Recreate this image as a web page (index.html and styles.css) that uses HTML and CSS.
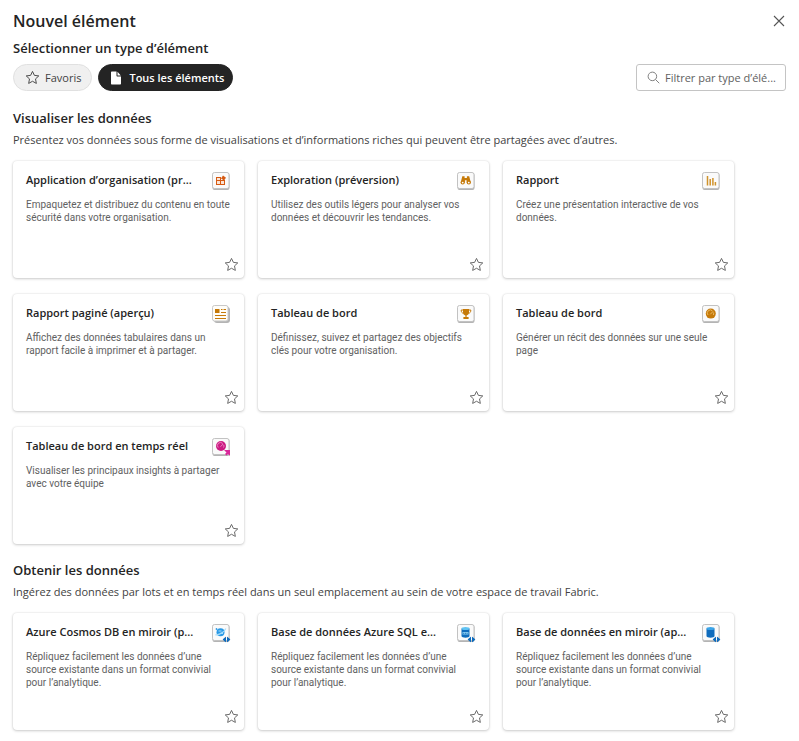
FILE: index.html
```html
<!DOCTYPE html>
<html lang="fr">
<head>
<meta charset="utf-8">
<meta name="viewport" content="width=device-width, initial-scale=1">
<title>Nouvel élément</title>
<link rel="stylesheet" href="styles.css">
</head>
<body>
<svg class="defs" aria-hidden="true">
  <defs>
    <symbol id="star" viewBox="0 0 16 16"><path d="M8 1.500l2 4.200 4.700.6-3.500 3.200.9 4.800L8 12l-4.100 2.300.9-4.800-3.500-3.200L6 5.700z" fill="none" stroke="currentColor" stroke-linejoin="round"/></symbol>
    <symbol id="tile" viewBox="0 0 20 20"><rect x="1.5" y="2" width="17" height="17" rx="2" fill="#b4b4b4"/><rect x="1.5" y="1.5" width="16.5" height="16" rx="2" fill="#fafafa" stroke="#c2c2c2"/></symbol>
    <symbol id="mirror" viewBox="0 0 8 6"><path d="M3.5 0v6L0 3zM4.5 0v6L8 3z" fill="#0f6cbd"/></symbol>
  </defs>
</svg>
<main class="dialog">
  <header class="header">
    <h1 class="title">Nouvel élément</h1>
    <button class="close" type="button" aria-label="Fermer"><svg viewBox="0 0 12 12"><path d="M1 1l10 10M11 1L1 11" fill="none" stroke="#555" stroke-width="1.1"/></svg></button>
  </header>
  <h2 class="heading">Sélectionner un type d’élément</h2>
  <div class="toolbar">
    <button class="pill" type="button"><svg class="star"><use href="#star"/></svg>Favoris</button>
    <button class="pill pill-active" type="button"><svg class="doc" viewBox="0 0 12 14"><path d="M2 0.5h4.5V4.5c0 .6.4 1 1 1H11v7c0 .6-.4 1-1 1H2c-.6 0-1-.4-1-1v-11c0-.6.4-1 1-1z M7.5.7L10.8 4.5H7.5z" fill="#fff"/></svg>Tous les éléments</button>
    <label class="search"><svg viewBox="0 0 14 14"><circle cx="5.8" cy="5.8" r="4.6" fill="none" stroke="#777"/><path d="M9.2 9.2l4 4" stroke="#777"/></svg><input type="text" aria-label="Filtrer par type d’élément" placeholder="Filtrer par type d’élé..."></label>
  </div>

  <section class="group">
    <h2 class="heading">Visualiser les données</h2>
    <p class="intro">Présentez vos données sous forme de visualisations et d’informations riches qui peuvent être partagées avec d’autres.</p>
    <div class="grid">
      <article class="card">
        <div class="card-head"><h3>Application d’organisation (pr...</h3>
          <svg class="icon" viewBox="0 0 20 20"><use href="#tile"/><path d="M5 6h5v3h4v5H5z" fill="#d65a12"/><path d="M6 7h3v2H6zM6 10h3v3H6zM10 10h3v3h-3z" fill="#fbe3d3"/><path d="M12 4.500l3 2.300-2 2.700-3-2z" fill="#d65a12"/></svg></div>
        <p>Empaquetez et distribuez du contenu en toute sécurité dans votre organisation.</p>
        <button class="fav" type="button" aria-label="Ajouter aux favoris"><svg class="star"><use href="#star"/></svg></button>
      </article>
      <article class="card">
        <div class="card-head"><h3>Exploration (préversion)</h3>
          <svg class="icon" viewBox="0 0 20 20"><use href="#tile"/><path d="M6.3 5.3h2.3V7h2.3V5.3h2.3l1.6 6.3H10.6V9.3H8.9v2.3H4.7z" fill="#c67a09"/><circle cx="6.7" cy="11.5" r="2.1" fill="#c67a09"/><circle cx="12.8" cy="11.5" r="2.1" fill="#c67a09"/><circle cx="6.7" cy="11.6" r=".9" fill="#fff"/><circle cx="12.8" cy="11.6" r=".9" fill="#fff"/></svg></div>
        <p>Utilisez des outils légers pour analyser vos données et découvrir les tendances.</p>
        <button class="fav" type="button" aria-label="Ajouter aux favoris"><svg class="star"><use href="#star"/></svg></button>
      </article>
      <article class="card">
        <div class="card-head"><h3>Rapport</h3>
          <svg class="icon" viewBox="0 0 20 20"><use href="#tile"/><path d="M6.500 5v9.500M9.200 8v6.500M11.900 7v7.500M14.400 11v3.500" fill="none" stroke="#d0922a" stroke-width="1.500"/></svg></div>
        <p>Créez une présentation interactive de vos données.</p>
        <button class="fav" type="button" aria-label="Ajouter aux favoris"><svg class="star"><use href="#star"/></svg></button>
      </article>
      <article class="card">
        <div class="card-head"><h3>Rapport paginé (aperçu)</h3>
          <svg class="icon" viewBox="0 0 20 20"><rect x="3" y="3" width="16" height="16" rx="3" fill="#b4b4b4"/><rect x="1.5" y="1.5" width="15.5" height="15.5" rx="2" fill="#fffdf8" stroke="#c8c8c8"/><path d="M4 5h4.500v4H4z" fill="#c67a09"/><path d="M10 5.500h1.500M12.500 5.500H15M10 8.500h5M4 11.500h11M4 14.500h11" stroke="#c67a09"/></svg></div>
        <p>Affichez des données tabulaires dans un rapport facile à imprimer et à partager.</p>
        <button class="fav" type="button" aria-label="Ajouter aux favoris"><svg class="star"><use href="#star"/></svg></button>
      </article>
      <article class="card">
        <div class="card-head"><h3>Tableau de bord</h3>
          <svg class="icon" viewBox="0 0 20 20"><use href="#tile"/><path d="M7 5h6v3.5c0 1.8-1.2 2.7-2.4 2.9v1.5h2V15H7.4v-2.1h2v-1.5C8.200 11.200 7 10.300 7 8.500z" fill="#c67a09"/><path d="M7 6H5.200c0 2 .6 3 2.100 3.200M13 6h1.800c0 2-.6 3-2.100 3.200" fill="none" stroke="#c67a09"/></svg></div>
        <p>Définissez, suivez et partagez des objectifs clés pour votre organisation.</p>
        <button class="fav" type="button" aria-label="Ajouter aux favoris"><svg class="star"><use href="#star"/></svg></button>
      </article>
      <article class="card">
        <div class="card-head"><h3>Tableau de bord</h3>
          <svg class="icon" viewBox="0 0 20 20"><use href="#tile"/><circle cx="9.800" cy="9.600" r="5" fill="#c67a09"/><path d="M7 11a3 3 0 0 1 4.500-4M12.600 8.500c.3 1 .1 1.800-.3 2.500M9.300 10.300L12 7.500" fill="none" stroke="#f0c878" stroke-width=".8"/></svg></div>
        <p>Générer un récit des données sur une seule page</p>
        <button class="fav" type="button" aria-label="Ajouter aux favoris"><svg class="star"><use href="#star"/></svg></button>
      </article>
      <article class="card">
        <div class="card-head"><h3>Tableau de bord en temps réel</h3>
          <svg class="icon" viewBox="0 0 20 20"><use href="#tile"/><circle cx="10" cy="9" r="5" fill="#cc1b82"/><path d="M7.200 10.500a3 3 0 0 1 4.500-4M12.800 8c.3 1 .1 1.800-.3 2.500M9.500 9.700L12.200 7" fill="none" stroke="#f0a0d0" stroke-width=".8"/><path d="M13 13h6v6l-2-2-1.500 1.500-1.500-1.500L15.500 15.500z" fill="#d9279a"/></svg></div>
        <p>Visualiser les principaux insights à partager avec votre équipe</p>
        <button class="fav" type="button" aria-label="Ajouter aux favoris"><svg class="star"><use href="#star"/></svg></button>
      </article>
    </div>
  </section>

  <section class="group">
    <h2 class="heading">Obtenir les données</h2>
    <p class="intro">Ingérez des données par lots et en temps réel dans un seul emplacement au sein de votre espace de travail Fabric.</p>
    <div class="grid">
      <article class="card">
        <div class="card-head"><h3>Azure Cosmos DB en miroir (p...</h3>
          <svg class="icon" viewBox="0 0 20 20"><use href="#tile"/><circle cx="9.500" cy="9.200" r="4" fill="#2899e6"/><path d="M4.500 11.500c1.500 1.500 9.500-2.500 10.200-6M7.500 8h3M9 10.300h3" fill="none" stroke="#a6dcfa" stroke-width="1.200"/><path d="M5.500 5v2M4.500 6h2" stroke="#2899e6" stroke-width=".8"/><use href="#mirror" x="11.500" y="13.500" width="8" height="6"/></svg></div>
        <p>Répliquez facilement les données d’une source existante dans un format convivial pour l’analytique.</p>
        <button class="fav" type="button" aria-label="Ajouter aux favoris"><svg class="star"><use href="#star"/></svg></button>
      </article>
      <article class="card">
        <div class="card-head"><h3>Base de données Azure SQL e...</h3>
          <svg class="icon" viewBox="0 0 20 20"><use href="#tile"/><path d="M5.500 5.500v7.500c0 2.200 8 2.200 8 0V5.500z" fill="#0f6cbd"/><ellipse cx="9.500" cy="5.500" rx="4" ry="1.500" fill="#5fc3f3"/><path d="M6.500 9h6v2.500h-6z" fill="#8cd0f5"/><path d="M7.200 10.300h4.600" stroke="#0f6cbd" stroke-dasharray="1 .7"/><use href="#mirror" x="11.500" y="13.500" width="8" height="6"/></svg></div>
        <p>Répliquez facilement les données d’une source existante dans un format convivial pour l’analytique.</p>
        <button class="fav" type="button" aria-label="Ajouter aux favoris"><svg class="star"><use href="#star"/></svg></button>
      </article>
      <article class="card">
        <div class="card-head"><h3>Base de données en miroir (ap...</h3>
          <svg class="icon" viewBox="0 0 20 20"><use href="#tile"/><path d="M5.500 5.500v7.500c0 2.200 8 2.200 8 0V5.500z" fill="#0f6cbd"/><ellipse cx="9.500" cy="5.500" rx="4" ry="1.500" fill="#3ba4e8"/><use href="#mirror" x="11.500" y="13.500" width="8" height="6"/></svg></div>
        <p>Répliquez facilement les données d’une source existante dans un format convivial pour l’analytique.</p>
        <button class="fav" type="button" aria-label="Ajouter aux favoris"><svg class="star"><use href="#star"/></svg></button>
      </article>
    </div>
  </section>
</main>
</body>
</html>
```
FILE: styles.css
```css
* { box-sizing: border-box; }
body {
  margin: 0;
  background: #fff;
  color: #242424;
  font-family: "Segoe UI", "Open Sans", "Noto Sans", sans-serif;
  font-size: 11px;
}
h1, h2, h3, p { margin: 0; }
button, input { font: inherit; color: inherit; }
button { cursor: pointer; }
.defs { position: absolute; width: 0; height: 0; }
.dialog { padding: 9px 13px 11px; }
.header { display: flex; justify-content: space-between; align-items: center; }
.title { font-size: 16px; line-height: 24px; font-weight: 600; }
.close { display: flex; padding: 1px; border: 0; background: none; }
.close svg { width: 12px; height: 12px; }
.heading { font-size: 13px; line-height: 20px; font-weight: 600; }
.header + .heading { margin-top: 5px; }
.toolbar { display: flex; gap: 6px; margin: 6px 0 17px; }
.pill {
  display: flex;
  align-items: center;
  gap: 5px;
  height: 27px;
  padding: 0 10px 0 11px;
  border: 1px solid #e0e0e0;
  border-radius: 14px;
  background: #f0f0f0;
  color: #424242;
}
.pill-active { gap: 7px; padding-right: 8px; background: #242424; border-color: #242424; color: #fff; font-weight: 600; }
.star { width: 15px; height: 15px; flex: none; }
.doc { width: 12px; height: 14px; }
.search {
  display: flex;
  align-items: center;
  gap: 5px;
  width: 150px;
  height: 27px;
  margin-left: auto;
  padding: 0 5px 0 10px;
  border: 1px solid #c4c4c4;
  border-radius: 3px;
}
.search svg { width: 13px; height: 13px; flex: none; }
.search input { min-width: 0; flex: 1; padding: 0; border: 0; outline: 0; background: none; }
.search input::placeholder { color: #616161; opacity: 1; }
.group + .group { margin-top: 16px; }
.intro { margin-top: 3px; line-height: 18px; color: #424242; }
.grid {
  display: grid;
  grid-template-columns: repeat(auto-fill, 231px);
  gap: 16px 14px;
  margin-top: 12px;
}
.card {
  display: flex;
  flex-direction: column;
  min-height: 117px;
  padding: 10px 5px 6px 13px;
  border-radius: 4px;
  box-shadow: 0 0 2px rgba(0, 0, 0, .12), 0 1px 3px rgba(0, 0, 0, .18);
}
.card-head { display: flex; justify-content: space-between; padding-right: 8px; }
.card h3 { font-size: 11px; line-height: 18px; font-weight: 600; white-space: nowrap; }
.icon { width: 20px; height: 20px; flex: none; }
.card p { margin-top: 7px; padding-right: 7px; font-family: "Segoe UI", Roboto, sans-serif; font-size: 10px; line-height: 13px; color: #616161; }
.fav { display: flex; margin-top: auto; align-self: flex-end; padding: 0; border: 0; background: none; color: #616161; }
```
